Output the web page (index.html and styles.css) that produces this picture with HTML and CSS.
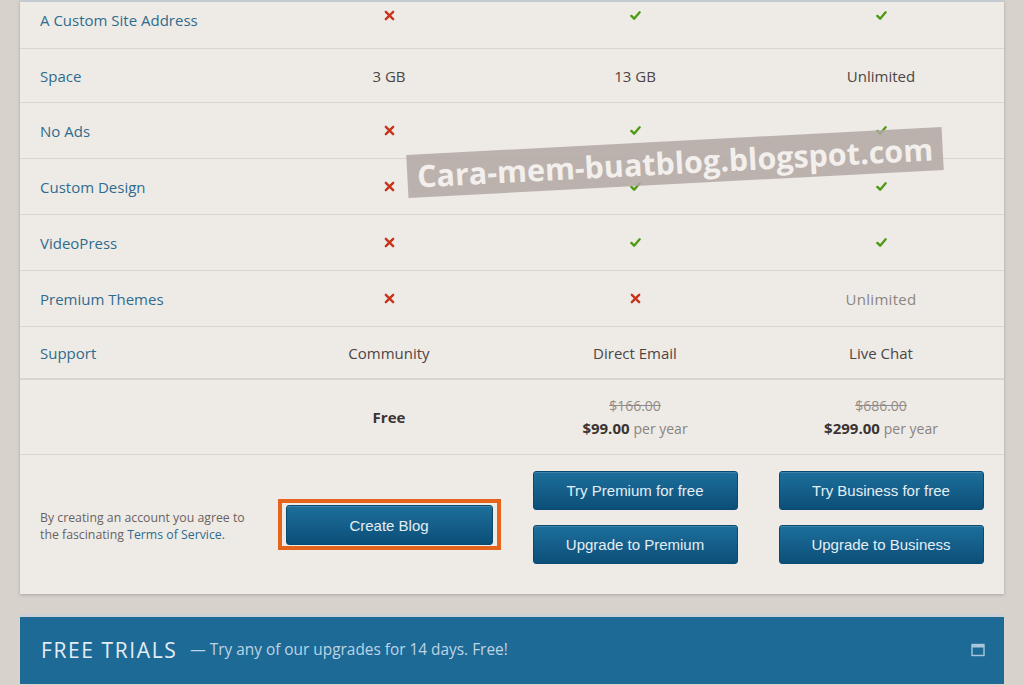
FILE: index.html
```html
<!DOCTYPE html>
<html>
<head>
<meta charset="utf-8">
<link rel="stylesheet" href="styles.css">
</head>
<body>
<div class="page">
  <div class="card">
    <div class="row first">
      <div class="label">A Custom Site Address</div>
      <div class="cell"><svg class="ico" viewBox="0 0 12 12"><path d="M2 2 L10 10 M10 2 L2 10" stroke="#c8341c" stroke-width="2.6" stroke-linecap="round"/></svg></div>
      <div class="cell"><svg class="ico" viewBox="0 0 12 12"><path d="M1.5 6.5 L4.5 9.5 L10.5 2.5" fill="none" stroke="#4f9a14" stroke-width="2.6" stroke-linecap="round" stroke-linejoin="round"/></svg></div>
      <div class="cell"><svg class="ico" viewBox="0 0 12 12"><path d="M1.5 6.5 L4.5 9.5 L10.5 2.5" fill="none" stroke="#4f9a14" stroke-width="2.6" stroke-linecap="round" stroke-linejoin="round"/></svg></div>
    </div>
    <div class="row second">
      <div class="label">Space</div>
      <div class="cell">3 GB</div>
      <div class="cell">13 GB</div>
      <div class="cell">Unlimited</div>
    </div>
    <div class="row">
      <div class="label">No Ads</div>
      <div class="cell"><svg class="ico" viewBox="0 0 12 12"><path d="M2 2 L10 10 M10 2 L2 10" stroke="#c8341c" stroke-width="2.6" stroke-linecap="round"/></svg></div>
      <div class="cell"><svg class="ico" viewBox="0 0 12 12"><path d="M1.5 6.5 L4.5 9.5 L10.5 2.5" fill="none" stroke="#4f9a14" stroke-width="2.6" stroke-linecap="round" stroke-linejoin="round"/></svg></div>
      <div class="cell"><svg class="ico" viewBox="0 0 12 12"><path d="M1.5 6.5 L4.5 9.5 L10.5 2.5" fill="none" stroke="#4f9a14" stroke-width="2.6" stroke-linecap="round" stroke-linejoin="round"/></svg></div>
    </div>
    <div class="row">
      <div class="label">Custom Design</div>
      <div class="cell"><svg class="ico" viewBox="0 0 12 12"><path d="M2 2 L10 10 M10 2 L2 10" stroke="#c8341c" stroke-width="2.6" stroke-linecap="round"/></svg></div>
      <div class="cell"><svg class="ico" viewBox="0 0 12 12"><path d="M1.5 6.5 L4.5 9.5 L10.5 2.5" fill="none" stroke="#4f9a14" stroke-width="2.6" stroke-linecap="round" stroke-linejoin="round"/></svg></div>
      <div class="cell"><svg class="ico" viewBox="0 0 12 12"><path d="M1.5 6.5 L4.5 9.5 L10.5 2.5" fill="none" stroke="#4f9a14" stroke-width="2.6" stroke-linecap="round" stroke-linejoin="round"/></svg></div>
    </div>
    <div class="row">
      <div class="label">VideoPress</div>
      <div class="cell"><svg class="ico" viewBox="0 0 12 12"><path d="M2 2 L10 10 M10 2 L2 10" stroke="#c8341c" stroke-width="2.6" stroke-linecap="round"/></svg></div>
      <div class="cell"><svg class="ico" viewBox="0 0 12 12"><path d="M1.5 6.5 L4.5 9.5 L10.5 2.5" fill="none" stroke="#4f9a14" stroke-width="2.6" stroke-linecap="round" stroke-linejoin="round"/></svg></div>
      <div class="cell"><svg class="ico" viewBox="0 0 12 12"><path d="M1.5 6.5 L4.5 9.5 L10.5 2.5" fill="none" stroke="#4f9a14" stroke-width="2.6" stroke-linecap="round" stroke-linejoin="round"/></svg></div>
    </div>
    <div class="row">
      <div class="label">Premium Themes</div>
      <div class="cell"><svg class="ico" viewBox="0 0 12 12"><path d="M2 2 L10 10 M10 2 L2 10" stroke="#c8341c" stroke-width="2.6" stroke-linecap="round"/></svg></div>
      <div class="cell"><svg class="ico" viewBox="0 0 12 12"><path d="M2 2 L10 10 M10 2 L2 10" stroke="#c8341c" stroke-width="2.6" stroke-linecap="round"/></svg></div>
      <div class="cell glitch">Unlimited</div>
    </div>
    <div class="row support">
      <div class="label">Support</div>
      <div class="cell">Community</div>
      <div class="cell">Direct Email</div>
      <div class="cell">Live Chat</div>
    </div>
    <div class="row price">
      <div class="label"></div>
      <div class="cell"><b class="amount">Free</b></div>
      <div class="cell stack">
        <s class="old">$166.00</s>
        <span><b class="amount">$99.00</b> <span class="per">per year</span></span>
      </div>
      <div class="cell stack">
        <s class="old">$686.00</s>
        <span><b class="amount">$299.00</b> <span class="per">per year</span></span>
      </div>
    </div>
    <div class="row actions">
      <div class="terms">By creating an account you agree to the fascinating <a class="link">Terms of Service</a>.</div>
      <div class="cell">
        <div class="highlight"><button class="btn create">Create Blog</button></div>
      </div>
      <div class="cell btns">
        <button class="btn">Try Premium for free</button>
        <button class="btn">Upgrade to Premium</button>
      </div>
      <div class="cell btns">
        <button class="btn">Try Business for free</button>
        <button class="btn">Upgrade to Business</button>
      </div>
    </div>
    <div class="watermark">Cara-mem-buatblog.blogspot.com</div>
  </div>
  <div class="trials">
    <span class="trials-title">FREE TRIALS</span>
    <span class="trials-sub">— Try any of our upgrades for 14 days. Free!</span>
    <svg class="trials-icon" viewBox="0 0 14 14"><rect x="1" y="1.5" width="12" height="11" fill="none" stroke="#a9c6da" stroke-width="1.4"/><rect x="1" y="1.5" width="12" height="3" fill="#a9c6da"/></svg>
  </div>
</div>
</body>
</html>
```
FILE: styles.css
```css
html, body {
  margin: 0;
  padding: 0;
}
body {
  background: #d8d2cd;
  font-family: "Open Sans", "Liberation Sans", sans-serif;
  height: 685px;
  overflow: hidden;
}
.page {
  padding: 0 20px;
}
.card {
  position: relative;
  background: #eeebe7;
  border-top: 2px solid #c3cad0;
  box-shadow: 0 1px 3px rgba(90, 80, 70, 0.35);
}
.row {
  display: grid;
  grid-template-columns: 246px 246px 246px 246px;
  height: 55px;
  border-bottom: 1px solid #d9d4cf;
  align-items: center;
}
.row.first {
  height: 46px;
  align-items: start;
}
.row.first .label, .row.first .cell {
  margin-top: 8px;
}
.row.second {
  height: 53px;
}
.row.support {
  height: 51px;
  border-bottom: 2px solid #d9d4cf;
}
.label {
  padding-left: 20px;
  font-size: 15px;
  color: #2f6b8d;
}
.cell {
  display: flex;
  justify-content: center;
  align-items: center;
  font-size: 15px;
  color: #4d4543;
}
.ico {
  width: 11px;
  height: 11px;
}
.glitch {
  color: #6a6360;
  opacity: 0.75;
  letter-spacing: 0.3px;
}
.row.price {
  height: 74px;
}
.stack {
  flex-direction: column;
  line-height: 22px;
  padding-top: 1px;
}
.amount {
  font-weight: 700;
  color: #3b3432;
  font-size: 15px;
}
.old {
  color: #928b87;
  font-size: 14px;
}
.per {
  color: #8a8380;
  font-size: 14px;
}
.row.actions {
  height: 139px;
  border-bottom: none;
  align-items: start;
}
.terms {
  padding: 54px 16px 0 20px;
  font-size: 12.3px;
  line-height: 17px;
  color: #6a625f;
}
.link {
  color: #2f6b8d;
}
.highlight {
  margin-top: 44px;
  border: 4px solid #e5641b;
  padding: 2px 4px 1px;
}
.btn {
  display: block;
  width: 205px;
  height: 39px;
  border: 1px solid #0a4a70;
  border-radius: 3px;
  background: linear-gradient(#1d6f9c, #0b4f78);
  color: #e4eef5;
  font-family: "Liberation Sans", Arial, sans-serif;
  font-size: 15px;
  box-shadow: inset 0 1px 0 rgba(255,255,255,0.15);
  padding: 0;
}
.btn.create {
  width: 207px;
  height: 40px;
}
.btns {
  flex-direction: column;
  gap: 15px;
  padding-top: 16px;
}
.watermark {
  position: absolute;
  left: 387px;
  top: 139px;
  width: 520px;
  height: 43px;
  padding: 0 8px;
  background: rgba(178, 168, 163, 0.85);
  color: #f3efec;
  font-family: "Open Sans", sans-serif;
  font-weight: 700;
  font-size: 30.5px;
  line-height: 43px;
  transform: rotate(-3deg);
  white-space: nowrap;
  text-align: center;
}
.trials {
  margin-top: 20px;
  height: 70px;
  box-sizing: border-box;
  padding: 0 21px 2px;
  background: #1e6a97;
  border-top: 3px solid #ccd1d8;
  display: flex;
  align-items: center;
}
.trials-title {
  font-size: 21px;
  letter-spacing: 1.6px;
  color: #e3edf4;
  margin-right: 13px;
}
.trials-sub {
  font-size: 15.4px;
  color: #bcd4e4;
}
.trials-icon {
  margin-left: auto;
  width: 14px;
  height: 14px;
  margin-right: -2px;
}
```
